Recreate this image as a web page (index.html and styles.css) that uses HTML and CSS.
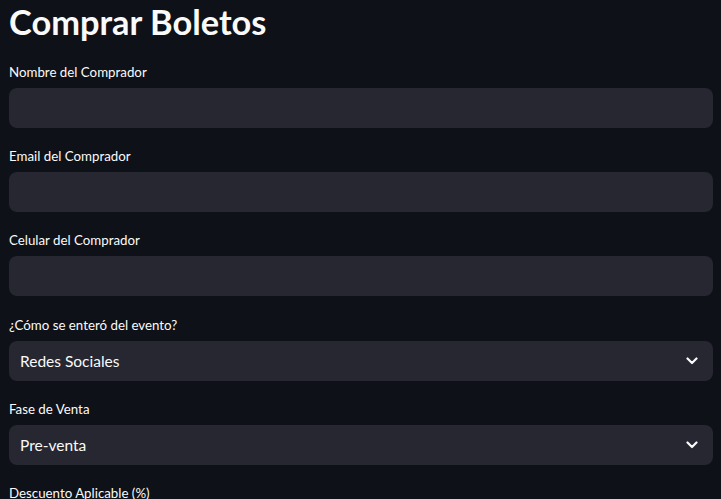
FILE: index.html
```html
<!DOCTYPE html>
<html lang="es">
<head>
<meta charset="utf-8">
<link rel="stylesheet" href="styles.css">
</head>
<body>
<main class="page">
  <h1 class="title">Comprar Boletos</h1>
  <div class="field">
    <label class="label">Nombre del Comprador</label>
    <div class="input"></div>
  </div>
  <div class="field">
    <label class="label">Email del Comprador</label>
    <div class="input"></div>
  </div>
  <div class="field">
    <label class="label">Celular del Comprador</label>
    <div class="input"></div>
  </div>
  <div class="field">
    <label class="label">¿Cómo se enteró del evento?</label>
    <div class="input select">
      <span class="value">Redes Sociales</span>
      <svg class="chev" width="12" height="8" viewBox="0 0 12 8"><path d="M1.5 1.5 L6 6 L10.5 1.5" fill="none" stroke="#fafafa" stroke-width="2.2" stroke-linecap="round" stroke-linejoin="round"/></svg>
    </div>
  </div>
  <div class="field">
    <label class="label">Fase de Venta</label>
    <div class="input select">
      <span class="value">Pre-venta</span>
      <svg class="chev" width="12" height="8" viewBox="0 0 12 8"><path d="M1.5 1.5 L6 6 L10.5 1.5" fill="none" stroke="#fafafa" stroke-width="2.2" stroke-linecap="round" stroke-linejoin="round"/></svg>
    </div>
  </div>
  <div class="field">
    <label class="label">Descuento Aplicable (%)</label>
  </div>
</main>
</body>
</html>
```
FILE: styles.css
```css
html, body {
  margin: 0;
  padding: 0;
  background: #0e1117;
  color: #fafafa;
  font-family: Lato, "Noto Sans", sans-serif;
  overflow: hidden;
}
.page {
  padding: 0 8px 0 9px;
  display: flex;
  flex-direction: column;
}
.title {
  margin: 0;
  height: 60px;
  font-size: 34.4px;
  font-weight: 700;
  line-height: 44px;
  letter-spacing: 0;
}
.field {
  display: flex;
  flex-direction: column;
  margin-bottom: 16.2px;
}
.label {
  font-size: 13.3px;
  line-height: 24px;
  height: 24px;
  margin-bottom: 4px;
}
.input {
  height: 40px;
  background: #262730;
  border-radius: 8px;
}
.select {
  display: flex;
  align-items: center;
  justify-content: space-between;
  padding: 0 15px 0 11px;
}
.value {
  font-size: 15.5px;
}
.chev {
  display: block;
}
```
